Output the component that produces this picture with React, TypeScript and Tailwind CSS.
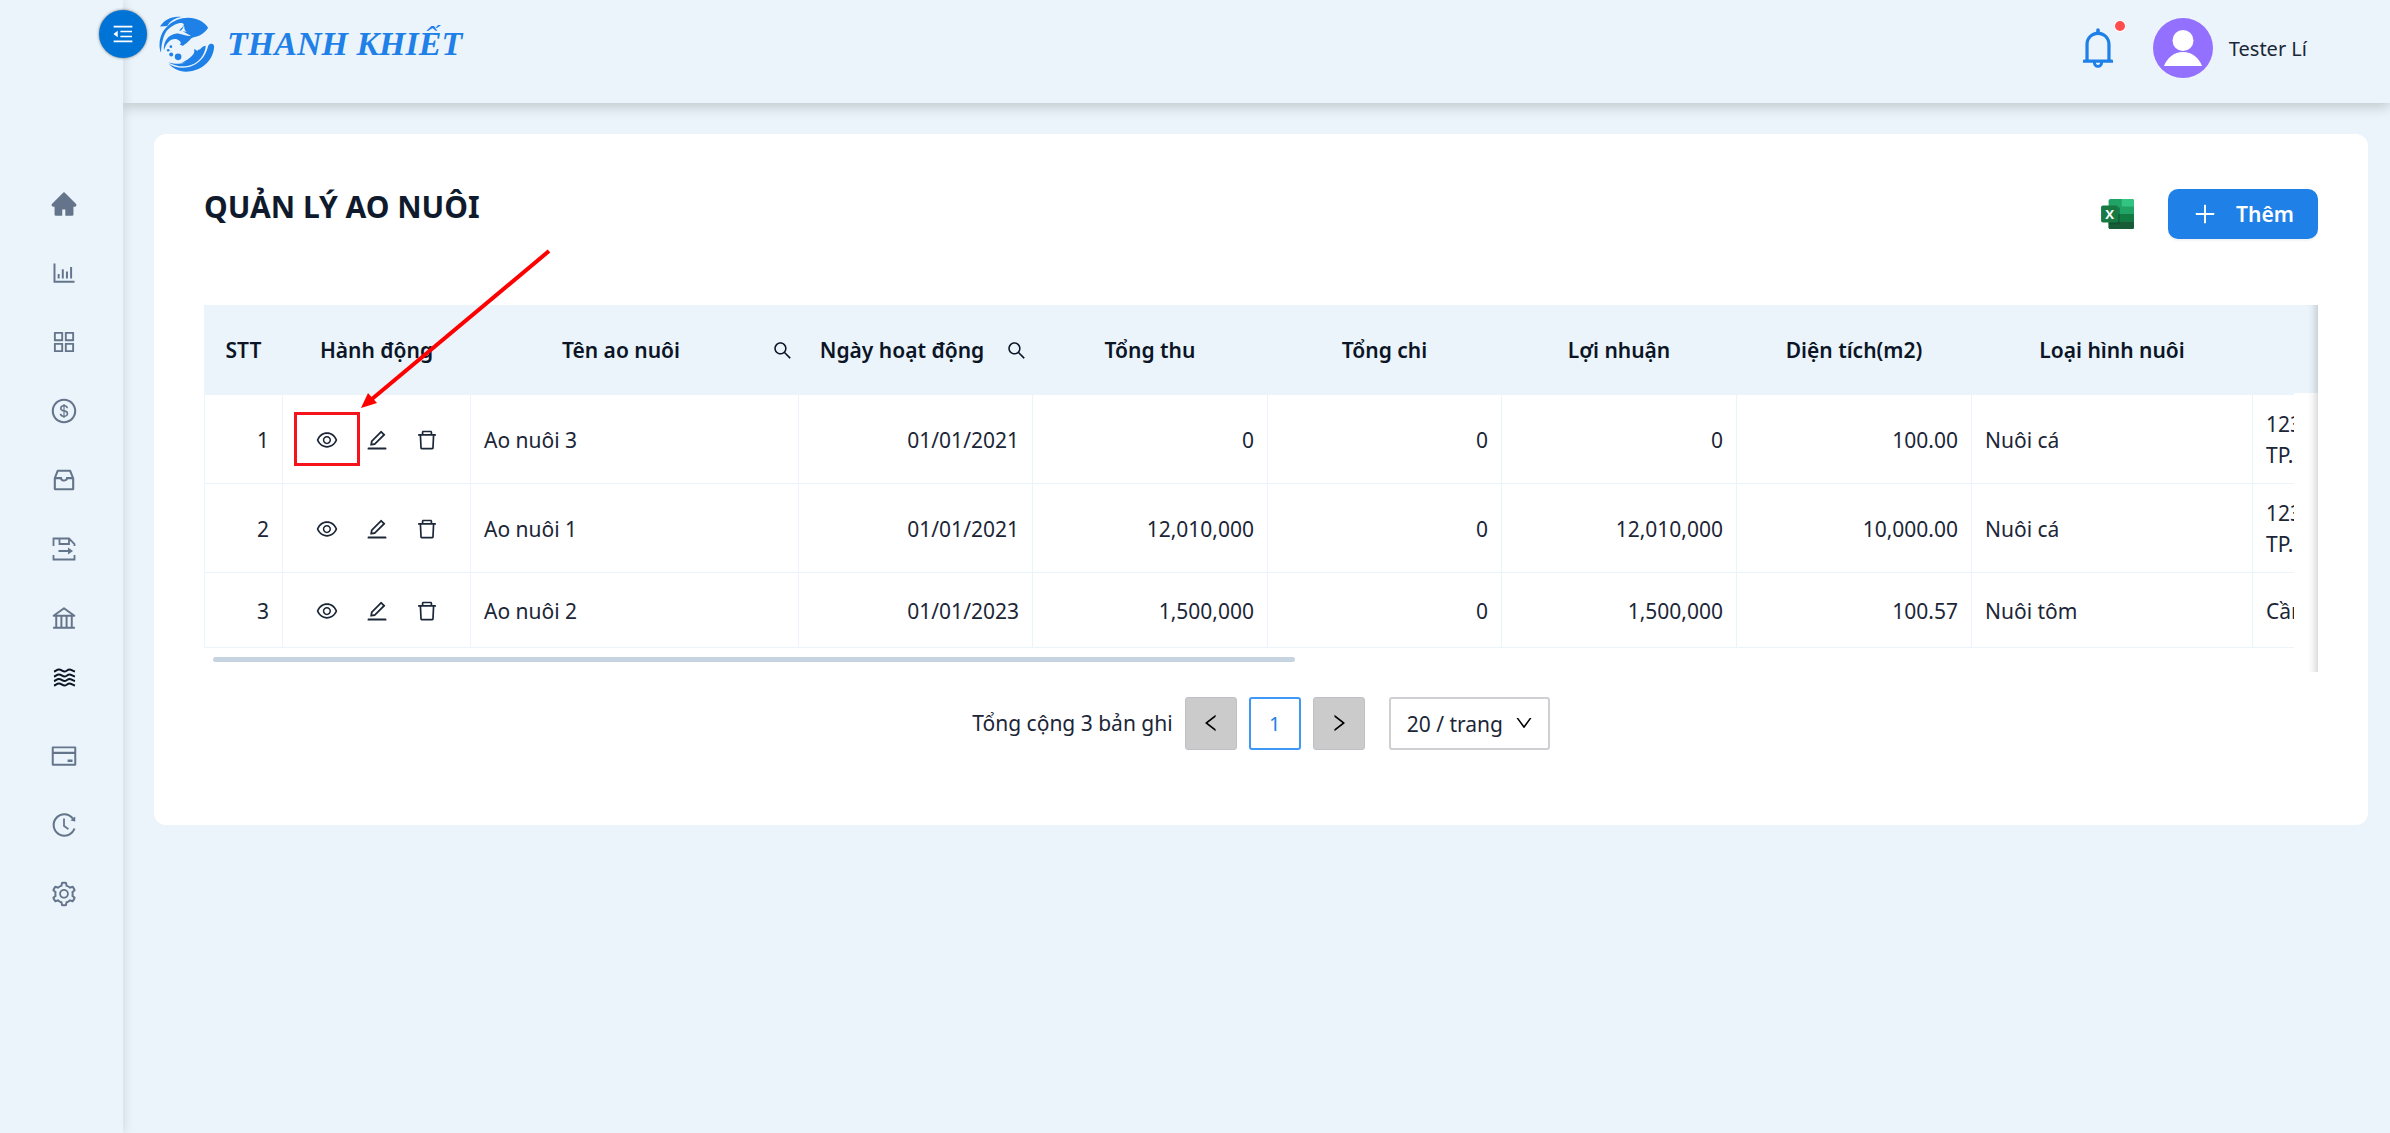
import {
  AiFillHome,
  AiOutlineAppstore,
  AiOutlineBank,
  AiOutlineBarChart,
  AiOutlineBell,
  AiOutlineCreditCard,
  AiOutlineDelete,
  AiOutlineDollarCircle,
  AiOutlineDown,
  AiOutlineEdit,
  AiOutlineEye,
  AiOutlineHistory,
  AiOutlineInbox,
  AiOutlineLeft,
  AiOutlineMenuFold,
  AiOutlinePlus,
  AiOutlineRight,
  AiOutlineSearch,
  AiOutlineSetting,
} from 'react-icons/ai';

const SaveMoveIcon = () => (
  <svg viewBox="0 0 28 28" className="size-7" fill="none" stroke="currentColor" strokeWidth="1.8">
    <path d="M3.500 11V3.500h15.500l5.500 5.500v2M3.500 20v4.500h21V20M9.500 4v5h9.500V4M8.500 16h11" />
    <path d="M18 12.500l5 3.500-5 3.500z" fill="currentColor" stroke="none" />
  </svg>
);

const WavesIcon = () => (
  <svg viewBox="0 0 28 28" className="size-7" fill="none" stroke="currentColor" strokeWidth="2">
    {[7, 12, 16.5, 21].map((y) => (
      <path key={y} d={`M4 ${y + 0.5}c2-.5 2.500-2 5-2s3.500 2 5.500 2 3-2 5-2 3 1.500 5.500 2`} />
    ))}
  </svg>
);

const LogoMark = () => (
  <svg viewBox="237 47 168 170" className="size-14" fill="#1f80e8">
    <path d="M239 79C252 58 276 46 304 50C284 53 270 62 261 77Z" />
    <path d="M264 76C284 55 318 47 346 55C364 60 379 71 385 83C376 99 354 113 331 113C338 107 327 104 319 99C310 94 303 90 297 91C300 86 307 83 311 74C312 70 308 68 303 68C291 68 276 76 264 87C254 96 244 118 242 158C235 143 236 115 247 96C252 88 258 82 264 76Z" />
    <path d="M311 74C315 84 311 89 321 95L301 93C305 87 311 84 311 74Z" fill="#eaf4fa" />
    <path d="M251 152C248 126 263 103 289 100C302 99 312 109 343 108C334 112 326 128 309 137C306 137 303 135 299 134C307 129 299 119 286 117C270 116 257 130 251 152Z" />
    <circle cx="264" cy="151" r="4" />
    <circle cx="272" cy="140" r="4" />
    <circle cx="273" cy="164" r="6" />
    <circle cx="294" cy="171" r="10" />
    <path d="M391 132C400 130 405 135 403 145C397 190 357 216 318 216C295 215 277 205 265 192C283 203 305 208 330 201C356 193 376 173 384 143C385 137 387 133 391 132Z" />
    <path d="M378 137C376 165 355 193 322 199C300 202 281 197 264 188C286 193 304 194 321 187C337 181 347 168 356 154C362 145 369 138 378 137Z" />
    <path d="M352 153C361 142 367 155 358 168C350 182 329 192 308 190C328 183 345 168 352 153Z" />
    <path d="M342 148C353 148 358 164 347 174C338 183 322 190 304 189C325 180 334 170 340 163C344 158 344 153 342 148Z" />
  </svg>
);

const ExcelIcon = () => (
  <svg viewBox="0 0 36 34" className="h-8 w-9">
    <rect x="8" y="1" width="27" height="32" rx="2" fill="#21a366" />
    <path d="M22 1h11a2 2 0 0 1 2 2v6H22z" fill="#33c481" />
    <path d="M8 17h27v8H8z" fill="#107c41" />
    <path d="M8 25h27v6a2 2 0 0 1-2 2H10a2 2 0 0 1-2-2z" fill="#185c37" />
    <rect x="8" y="10" width="12" height="18" fill="#0b4528" opacity=".4" />
    <rect x="0" y="8" width="18" height="18" rx="2" fill="#177a43" />
    <text x="9" y="22" textAnchor="middle" fill="#fff" fontSize="14" fontWeight="700" fontFamily="Open Sans, sans-serif">X</text>
  </svg>
);

const navItems = [
  { label: 'Trang chủ', icon: AiFillHome },
  { label: 'Thống kê', icon: AiOutlineBarChart },
  { label: 'Danh mục', icon: AiOutlineAppstore },
  { label: 'Thu chi', icon: AiOutlineDollarCircle },
  { label: 'Kho', icon: AiOutlineInbox },
  { label: 'Xuất kho', icon: SaveMoveIcon },
  { label: 'Ngân hàng', icon: AiOutlineBank },
  { label: 'Ao nuôi', icon: WavesIcon, active: true },
  { label: 'Thanh toán', icon: AiOutlineCreditCard },
  { label: 'Lịch sử', icon: AiOutlineHistory },
  { label: 'Cài đặt', icon: AiOutlineSetting },
];

const ponds = [
  { name: 'Ao nuôi 3', date: '01/01/2021', income: '0', expense: '0', profit: '0', area: '100.00', type: 'Nuôi cá', address: ['123', 'TP.'] },
  { name: 'Ao nuôi 1', date: '01/01/2021', income: '12,010,000', expense: '0', profit: '12,010,000', area: '10,000.00', type: 'Nuôi cá', address: ['123', 'TP.'] },
  { name: 'Ao nuôi 2', date: '01/01/2023', income: '1,500,000', expense: '0', profit: '1,500,000', area: '100.57', type: 'Nuôi tôm', address: ['Cần'] },
];

const Sidebar = () => (
  <aside className="relative z-10 w-[123px] shrink-0 bg-[#eaf4fa] shadow-[2px_0_10px_rgba(0,0,0,0.1)]">
    <nav className="flex flex-col items-center pt-[169px] pl-1">
      {navItems.map(({ label, icon: Icon, active }) => (
        <a
          key={label}
          href="#"
          aria-label={label}
          className={
            active
              ? 'flex h-[69px] items-start pt-3 text-[28px] text-[#0b1526]'
              : 'flex h-[69px] items-center text-[28px] text-[#64748b]'
          }
        >
          <Icon />
        </a>
      ))}
    </nav>
    <button
      aria-label="Thu gọn"
      className="absolute top-[10px] -right-6 flex size-12 items-center justify-center rounded-full bg-[#0073d6] text-[24px] text-white shadow-[0_0_3px_rgba(0,0,0,0.5)]"
    >
      <AiOutlineMenuFold />
    </button>
  </aside>
);

const Header = () => (
  <header className="flex h-[103px] items-start justify-between bg-[#eaf4fa] pr-[83px] pl-9 shadow-[0_4px_12px_rgba(0,0,0,0.18)]">
    <a href="#" className="flex items-center gap-3 pt-4">
      <LogoMark />
      <span className="font-['Liberation_Serif',serif] text-[34px] leading-[48px] font-bold text-[#1f80e8] italic">THANH KHIẾT</span>
    </a>
    <div className="flex items-center pt-[18px]">
      <button aria-label="Thông báo" className="relative mr-8 text-[46px] text-[#1f80e8]">
        <AiOutlineBell />
        <span className="absolute -top-1 -right-1 size-[10px] rounded-full bg-[#ff4d4f] ring-1 ring-white" />
      </button>
      <svg viewBox="0 0 60 60" className="size-15">
        <circle cx="30" cy="30" r="30" fill="#9370ff" />
        <circle cx="30" cy="22.500" r="10.500" fill="#fff" />
        <path d="M11 48c3-8 10-14 19-14s16 6 19 14z" fill="#fff" />
      </svg>
      <span className="ml-4 text-[20px]">Tester Lí</span>
    </div>
  </header>
);

const RowActions = () => (
  <div className="flex items-center justify-center gap-[26px] text-[24px]">
    <button aria-label="Xem"><AiOutlineEye /></button>
    <button aria-label="Sửa"><AiOutlineEdit /></button>
    <button aria-label="Xóa"><AiOutlineDelete /></button>
  </div>
);

const PondTable = () => (
  <div className="relative mt-[66px]">
    {/* the header strip runs on under the edge shadow, the rows stop short of it */}
    <div className="bg-linear-to-b from-[#eaf4fa] from-[88px] to-white to-[88px] pr-6">
      <div className="overflow-hidden">
        <table className="w-[3270px] table-fixed border-collapse">
          <colgroup>
            <col className="w-[78px]" />
            <col className="w-[188px]" />
            <col className="w-[328px]" />
            <col className="w-[234px]" />
            <col className="w-[235px]" />
            <col className="w-[234px]" />
            <col className="w-[235px]" />
            <col className="w-[235px]" />
            <col className="w-[281px]" />
            <col />
          </colgroup>
          <thead>
            <tr className="h-[89px] bg-[#eaf4fa] text-[#0b1526] [&>th]:pt-[2px] [&>th]:font-semibold">
              <th>STT</th>
              <th>Hành động</th>
              <th>
                <div className="flex items-center pr-[6px]">
                  <span className="flex-1">Tên ao nuôi</span>
                  <button aria-label="Tìm tên ao nuôi" className="text-[21px]"><AiOutlineSearch /></button>
                </div>
              </th>
              <th>
                <div className="flex items-center pr-[6px]">
                  <span className="flex-1 whitespace-nowrap">Ngày hoạt động</span>
                  <button aria-label="Tìm ngày hoạt động" className="text-[21px]"><AiOutlineSearch /></button>
                </div>
              </th>
              <th>Tổng thu</th>
              <th>Tổng chi</th>
              <th>Lợi nhuận</th>
              <th>Diện tích(m2)</th>
              <th>Loại hình nuôi</th>
              <th />
            </tr>
          </thead>
          <tbody className="[&_td]:border [&_td]:border-[#eaf4fa] [&_td]:px-[13px] [&_td]:pt-[3px]">
            {ponds.map((pond, i) => (
              <tr key={pond.name} className={pond.address.length > 1 ? 'h-[89px]' : 'h-[75px]'}>
                <td className="text-right">{i + 1}</td>
                <td><RowActions /></td>
                <td>{pond.name}</td>
                <td className="text-right">{pond.date}</td>
                <td className="text-right">{pond.income}</td>
                <td className="text-right">{pond.expense}</td>
                <td className="text-right">{pond.profit}</td>
                <td className="text-right">{pond.area}</td>
                <td>{pond.type}</td>
                <td>
                  {pond.address.map((line) => (
                    <div key={line}>{line}</div>
                  ))}
                </td>
              </tr>
            ))}
          </tbody>
        </table>
      </div>
      <div className="flex h-6 items-center pl-[9px]">
        <div className="h-[5px] w-[52%] rounded-full bg-[#c6d4e1]" />
      </div>
    </div>
    <div className="pointer-events-none absolute inset-y-0 right-0 w-6 shadow-[inset_-10px_0_8px_-8px_rgba(5,5,5,0.2)]" />

    {/* callout for the view button of the first row */}
    <div className="pointer-events-none absolute top-[107px] left-[90px] h-[54px] w-[66px] border-3 border-[#f5141c]" />
    <svg viewBox="0 0 192 162" className="pointer-events-none absolute -top-[57px] left-[156px] h-[162px] w-[192px]">
      <path d="M189 3L12 151" stroke="#fe0000" strokeWidth="4" />
      <path d="M1 160l7-15 9 10z" fill="#fe0000" />
    </svg>
  </div>
);

const Pagination = () => (
  <div className="mt-[25px] flex items-center justify-center">
    <span className="mr-3">Tổng cộng 3 bản ghi</span>
    <button aria-label="Trang trước" className="flex h-[53px] w-[52px] items-center justify-center rounded-[3px] border border-[#bfbfc7] bg-[#cbcbcb] text-[22px] text-black">
      <AiOutlineLeft />
    </button>
    <button className="mx-3 h-[53px] w-[52px] rounded-[3px] border-2 border-[#3f97f6] text-[20px] text-[#1f80e8]">1</button>
    <button aria-label="Trang sau" className="flex h-[53px] w-[52px] items-center justify-center rounded-[3px] border border-[#bfbfc7] bg-[#cbcbcb] text-[22px] text-black">
      <AiOutlineRight />
    </button>
    <div className="relative ml-6">
      <select aria-label="Số dòng mỗi trang" className="h-[53px] w-[161px] appearance-none rounded-[3px] border-2 border-[#cfcfd4] bg-white pt-[2px] pl-4">
        <option>20 / trang</option>
        <option>50 / trang</option>
      </select>
      <AiOutlineDown className="pointer-events-none absolute top-4 right-4 text-[20px] text-black" />
    </div>
  </div>
);

export default function App() {
  return (
    <div className="flex min-h-screen bg-[#eaf4fa] font-['Noto_Sans',sans-serif] text-[21px] leading-[31px] text-[#1b2637]">
      <Sidebar />
      <div className="min-w-0 flex-1">
        <Header />
        <main className="mt-[31px] mr-[22px] ml-[31px] rounded-xl bg-white px-[50px] pt-[55px] pb-[75px]">
          <div className="flex items-start justify-between">
            <h1 className="text-[30px] leading-[36px] font-bold text-[#0f1b2d]">QUẢN LÝ AO NUÔI</h1>
            <div className="flex items-center gap-8">
              <button aria-label="Xuất Excel"><ExcelIcon /></button>
              <button className="flex h-[50px] w-[150px] items-center justify-center gap-[18px] rounded-[10px] bg-[#1f80e8] font-semibold text-white shadow-[0_2px_2px_rgba(0,0,0,0.05)]">
                <AiOutlinePlus className="text-[26px]" />
                Thêm
              </button>
            </div>
          </div>
          <PondTable />
          <Pagination />
        </main>
      </div>
    </div>
  );
}
